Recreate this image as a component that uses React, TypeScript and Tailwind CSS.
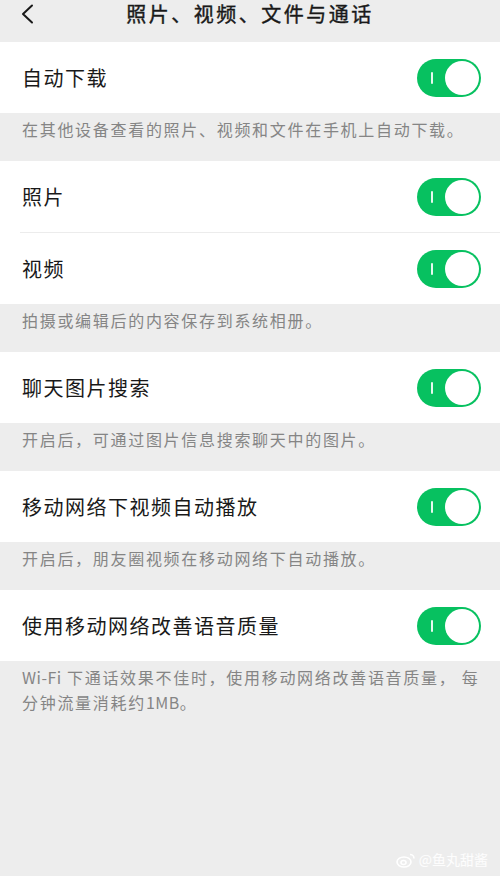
import type { ReactNode } from "react";

const FONT = { fontFamily: '"Noto Sans CJK SC", "Noto Sans", sans-serif' };

function Toggle() {
  return (
    <div className="relative h-[38px] w-[64px] shrink-0 rounded-full bg-[#07c160]">
      <span className="absolute left-[14px] top-[13px] h-[12px] w-[2px] rounded-full bg-white/90" />
      <span className="absolute right-[2px] top-[2px] h-[34px] w-[34px] rounded-full bg-white" />
    </div>
  );
}

function Row({ label }: { label: string }) {
  return (
    <div className="flex h-[71px] items-center justify-between pl-[22px] pr-[19px]">
      <span className="text-[20px] tracking-[1.5px] text-[#191919]">{label}</span>
      <Toggle />
    </div>
  );
}

function Note({ children }: { children: ReactNode }) {
  return (
    <p className="min-h-[48px] pl-[22px] pr-[14px] pb-[10px] pt-[4px] text-[16px] leading-[25px] tracking-[1.7px] text-[#858585]">
      {children}
    </p>
  );
}

export default function App() {
  return (
    <div style={FONT} className="relative h-[876px] w-[500px] overflow-hidden bg-[#ededed]">
      {/* 顶部导航 */}
      <header className="relative flex h-[42px] items-start justify-center">
        <svg
          className="absolute left-[21px] top-[4px]"
          width="13"
          height="20"
          viewBox="0 0 13 20"
          fill="none"
          stroke="#191919"
          strokeWidth="2"
          strokeLinecap="round"
          strokeLinejoin="round"
        >
          <polyline points="11,1.5 2,10 11,18.5" />
        </svg>
        <h1 className="text-[20px] font-normal leading-[28px] tracking-[2.5px] text-[#191919] [-webkit-text-stroke:0.4px_#191919]">
          照片、视频、文件与通话
        </h1>
      </header>

      <section className="bg-white">
        <Row label="自动下载" />
      </section>
      <Note>在其他设备查看的照片、视频和文件在手机上自动下载。</Note>

      <section className="bg-white">
        <Row label="照片" />
        <div className="ml-[20px] h-px bg-[#ececec]" />
        <Row label="视频" />
      </section>
      <Note>拍摄或编辑后的内容保存到系统相册。</Note>

      <section className="bg-white">
        <Row label="聊天图片搜索" />
      </section>
      <Note>开启后，可通过图片信息搜索聊天中的图片。</Note>

      <section className="bg-white">
        <Row label="移动网络下视频自动播放" />
      </section>
      <Note>开启后，朋友圈视频在移动网络下自动播放。</Note>

      <section className="bg-white">
        <Row label="使用移动网络改善语音质量" />
      </section>
      <Note>
        <span className="whitespace-nowrap">
          <span className="tracking-[0.5px]">Wi-Fi</span> 下通话效果不佳时，使用移动网络改善语音质量， 每
        </span>
        <br />
        分钟流量消耗约<span className="tracking-[0.5px]">1MB</span>。
      </Note>

      {/* 水印 */}
      <div className="absolute bottom-[6px] right-[12px] flex items-center gap-[3px] text-[14px] text-white/90">
        <svg width="20" height="16" viewBox="0 0 20 16" fill="none" stroke="white" strokeWidth="1.6">
          <ellipse cx="8" cy="10" rx="7" ry="5" />
          <ellipse cx="7.5" cy="10.5" rx="2.5" ry="2" />
          <path d="M14 2.5 a4 4 0 0 1 4 4" />
        </svg>
        <span>@鱼丸甜酱</span>
      </div>
    </div>
  );
}
